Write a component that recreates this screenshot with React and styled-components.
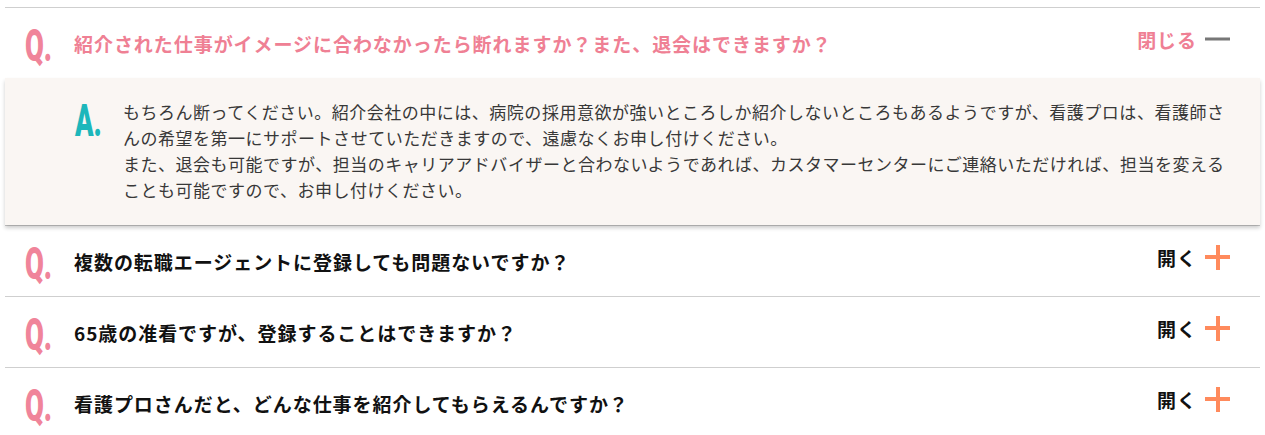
import React from 'react'
import styled, { createGlobalStyle } from 'styled-components'

const GlobalStyle = createGlobalStyle`
    body {
        margin: 0;
        background: #fff;
        font-family: "Noto Sans CJK JP", "Noto Sans", sans-serif;
    }
`

const Page = styled.div`
    padding: 7px 5px 0;
`

const FaqList = styled.ul`
    list-style: none;
    margin: 0;
    padding: 0;
`

const FaqItem = styled.li`
    border-top: 1px solid #cfcfcf;
`

const Question = styled.div`
    height: 70px;
    display: flex;
    align-items: center;
    padding: 0 30px 0 20px;
    cursor: pointer;
`

const Mark = styled.span`
    flex: none;
    width: ${p => p.$width}px;
    height: 40px;
    font-family: Roboto, "Liberation Sans", sans-serif;
    font-weight: 900;
    font-size: 44px;
    line-height: 40px;
    color: ${p => p.$color};
    transform: scaleX(0.62);
    transform-origin: left center;
    margin-top: ${p => p.$offset || 0}px;
`

const QuestionText = styled.p`
    flex: 1;
    margin: 0;
    font-size: 19px;
    font-weight: 700;
    letter-spacing: 0.05em;
    color: ${p => (p.$open ? '#ef8094' : '#111')};
`

const Toggle = styled.span`
    flex: none;
    display: flex;
    align-items: center;
    gap: 8px;
    margin-bottom: 8px;
    font-size: 19px;
    font-weight: 700;
    letter-spacing: 0.05em;
    color: ${p => (p.$open ? '#ef8094' : '#111')};
`

const Sign = styled.span`
    position: relative;
    width: 25px;
    height: 25px;

    &::before,
    &::after {
        content: '';
        position: absolute;
        background: ${p => (p.$open ? '#777' : '#ff8a5c')};
    }

    &::before {
        left: 0;
        right: 0;
        top: 50%;
        height: ${p => (p.$open ? 3 : 4)}px;
        transform: translateY(-50%);
    }

    &::after {
        display: ${p => (p.$open ? 'none' : 'block')};
        top: 0;
        bottom: 0;
        left: 50%;
        width: 4px;
        transform: translateX(-50%);
    }
`

const Answer = styled.div`
    position: relative;
    z-index: 1;
    display: flex;
    align-items: flex-start;
    padding: 21px 22px 22px 70px;
    background: #faf6f3;
    box-shadow: 0 3px 4px rgba(0, 0, 0, 0.2);
`

const AnswerText = styled.p`
    flex: 1;
    margin: 0;
    font-size: 17px;
    line-height: 26px;
    letter-spacing: 0.03em;
    color: #383838;
`

const faqs = [
    {
        q: '紹介された仕事がイメージに合わなかったら断れますか？また、退会はできますか？',
        a: [
            'もちろん断ってください。紹介会社の中には、病院の採用意欲が強いところしか紹介しないところもあるようですが、看護プロは、看護師さんの希望を第一にサポートさせていただきますので、遠慮なくお申し付けください。',
            'また、退会も可能ですが、担当のキャリアアドバイザーと合わないようであれば、カスタマーセンターにご連絡いただければ、担当を変える',
            'ことも可能ですので、お申し付けください。',
        ],
        open: true,
    },
    { q: '複数の転職エージェントに登録しても問題ないですか？' },
    { q: '65歳の准看ですが、登録することはできますか？' },
    { q: '看護プロさんだと、どんな仕事を紹介してもらえるんですか？' },
]

function FaqRow({ item }) {
    return (
        <FaqItem>
            <Question>
                <Mark $width={49} $color="#f0849a" $offset={6}>Q.</Mark>
                <QuestionText $open={item.open}>{item.q}</QuestionText>
                <Toggle $open={item.open}>
                    {item.open ? '閉じる' : '開く'}
                    <Sign $open={item.open} />
                </Toggle>
            </Question>
            {item.open && (
                <Answer>
                    <Mark $width={48} $color="#1db7bb" $offset={2}>A.</Mark>
                    <AnswerText>
                        {item.a.map((line, i) => (
                            <React.Fragment key={i}>
                                {i > 0 && <br />}
                                {line}
                            </React.Fragment>
                        ))}
                    </AnswerText>
                </Answer>
            )}
        </FaqItem>
    )
}

export default function App() {
    return (
        <Page>
            <GlobalStyle />
            <FaqList>
                {faqs.map((item, i) => (
                    <FaqRow key={i} item={item} />
                ))}
            </FaqList>
        </Page>
    )
}
